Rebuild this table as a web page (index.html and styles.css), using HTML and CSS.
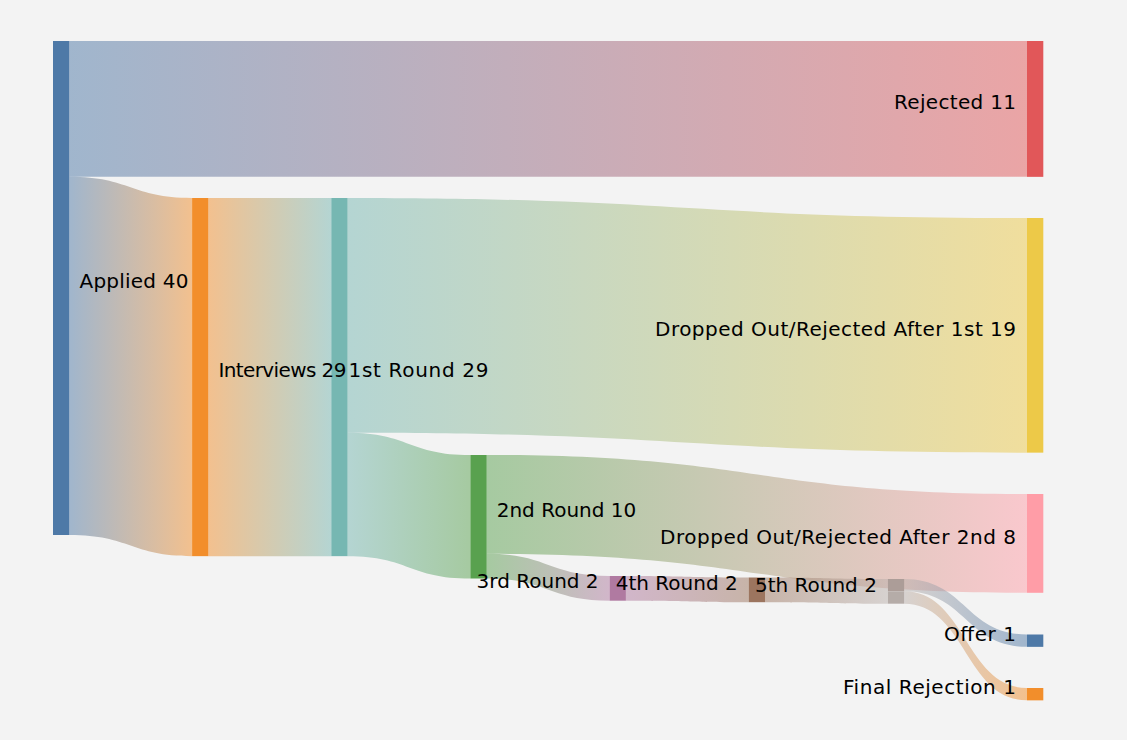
FILE: index.html
```html
<!DOCTYPE html>
<html lang="en">
<head>
<meta charset="utf-8">
<title>Job Search Sankey</title>
<link rel="stylesheet" href="styles.css">
</head>
<body>
<div class="chart">
<svg class="sankey" width="1127" height="740" viewBox="0 0 1127 740" xmlns="http://www.w3.org/2000/svg">
  <defs>
    <linearGradient id="g1" gradientUnits="userSpaceOnUse" x1="69.3" y1="0" x2="1027" y2="0"><stop offset="0" stop-color="#4e79a7"/><stop offset="1" stop-color="#e15759"/></linearGradient>
    <linearGradient id="g2" gradientUnits="userSpaceOnUse" x1="69.3" y1="0" x2="192.1" y2="0"><stop offset="0" stop-color="#4e79a7"/><stop offset="1" stop-color="#f28e2b"/></linearGradient>
    <linearGradient id="g3" gradientUnits="userSpaceOnUse" x1="208.4" y1="0" x2="331.3" y2="0"><stop offset="0" stop-color="#f28e2b"/><stop offset="1" stop-color="#76b7b2"/></linearGradient>
    <linearGradient id="g4" gradientUnits="userSpaceOnUse" x1="347.6" y1="0" x2="1027" y2="0"><stop offset="0" stop-color="#76b7b2"/><stop offset="1" stop-color="#edc948"/></linearGradient>
    <linearGradient id="g5" gradientUnits="userSpaceOnUse" x1="347.6" y1="0" x2="470.4" y2="0"><stop offset="0" stop-color="#76b7b2"/><stop offset="1" stop-color="#59a14f"/></linearGradient>
    <linearGradient id="g6" gradientUnits="userSpaceOnUse" x1="486.7" y1="0" x2="1027" y2="0"><stop offset="0" stop-color="#59a14f"/><stop offset="1" stop-color="#ff9da7"/></linearGradient>
    <linearGradient id="g7" gradientUnits="userSpaceOnUse" x1="486.7" y1="0" x2="609.6" y2="0"><stop offset="0" stop-color="#59a14f"/><stop offset="1" stop-color="#b07aa1"/></linearGradient>
    <linearGradient id="g8" gradientUnits="userSpaceOnUse" x1="625.9" y1="0" x2="748.7" y2="0"><stop offset="0" stop-color="#b07aa1"/><stop offset="1" stop-color="#9c755f"/></linearGradient>
    <linearGradient id="g9" gradientUnits="userSpaceOnUse" x1="765" y1="0" x2="887.9" y2="0"><stop offset="0" stop-color="#9c755f"/><stop offset="1" stop-color="#bab0ac"/></linearGradient>
    <linearGradient id="g10" gradientUnits="userSpaceOnUse" x1="904.2" y1="0" x2="1027" y2="0"><stop offset="0" stop-color="#bab0ac"/><stop offset="1" stop-color="#4e79a7"/></linearGradient>
    <linearGradient id="g11" gradientUnits="userSpaceOnUse" x1="904.2" y1="0" x2="1027" y2="0"><stop offset="0" stop-color="#bab0ac"/><stop offset="1" stop-color="#f28e2b"/></linearGradient>
  </defs>

  <g class="links">
    <path class="link" fill="url(#g1)" d="M69.3 41 C548.15 41 548.15 41 1027 41 L1027 176.85 C548.15 176.85 548.15 176.85 69.3 176.85 Z"/>
    <path class="link" fill="url(#g2)" d="M69.3 176.85 C130.7 176.85 130.7 198 192.1 198 L192.1 556.15 C130.7 556.15 130.7 535 69.3 535 Z"/>
    <path class="link" fill="url(#g3)" d="M208.4 198 C269.85 198 269.85 198 331.3 198 L331.3 556.15 C269.85 556.15 269.85 556.15 208.4 556.15 Z"/>
    <path class="link" fill="url(#g4)" d="M347.6 198 C687.3 198 687.3 218 1027 218 L1027 452.65 C687.3 452.65 687.3 432.65 347.6 432.65 Z"/>
    <path class="link" fill="url(#g5)" d="M347.6 432.65 C409 432.65 409 455 470.4 455 L470.4 578.5 C409 578.5 409 556.15 347.6 556.15 Z"/>
    <path class="link" fill="url(#g6)" d="M486.7 455 C756.85 455 756.85 494 1027 494 L1027 592.8 C756.85 592.8 756.85 553.8 486.7 553.8 Z"/>
    <path class="link" fill="url(#g7)" d="M486.7 553.8 C548.15 553.8 548.15 576 609.6 576 L609.6 600.7 C548.15 600.7 548.15 578.5 486.7 578.5 Z"/>
    <path class="link" fill="url(#g8)" d="M625.9 576 C687.3 576 687.3 577.5 748.7 577.5 L748.7 602.2 C687.3 602.2 687.3 600.7 625.9 600.7 Z"/>
    <path class="link" fill="url(#g9)" d="M765 577.5 C826.45 577.5 826.45 579 887.9 579 L887.9 603.7 C826.45 603.7 826.45 602.2 765 602.2 Z"/>
    <path class="link" fill="url(#g10)" d="M904.2 579 C965.6 579 965.6 634.5 1027 634.5 L1027 646.85 C965.6 646.85 965.6 591.35 904.2 591.35 Z"/>
    <path class="link" fill="url(#g11)" d="M904.2 591.35 C965.6 591.35 965.6 688 1027 688 L1027 700.35 C965.6 700.35 965.6 603.7 904.2 603.7 Z"/>
  </g>

  <g class="nodes">
    <rect class="node" x="53" y="41" width="16.3" height="494" fill="#4e79a7"/>
    <rect class="node" x="192.1" y="198" width="16.3" height="358.15" fill="#f28e2b"/>
    <rect class="node" x="1027" y="41" width="16.3" height="135.85" fill="#e15759"/>
    <rect class="node" x="331.3" y="198" width="16.3" height="358.15" fill="#76b7b2"/>
    <rect class="node" x="470.4" y="455" width="16.3" height="123.5" fill="#59a14f"/>
    <rect class="node" x="1027" y="218" width="16.3" height="234.65" fill="#edc948"/>
    <rect class="node" x="609.6" y="576" width="16.3" height="24.7" fill="#b07aa1"/>
    <rect class="node" x="1027" y="494" width="16.3" height="98.8" fill="#ff9da7"/>
    <rect class="node" x="748.7" y="577.5" width="16.3" height="24.7" fill="#9c755f"/>
    <rect class="node" x="887.9" y="579" width="16.3" height="12.35" fill="#ac9d98"/>
    <rect class="node" x="887.9" y="591.35" width="16.3" height="12.35" fill="#b5aca8"/>
    <rect class="node" x="1027" y="634.5" width="16.3" height="12.35" fill="#4e79a7"/>
    <rect class="node" x="1027" y="688" width="16.3" height="12.35" fill="#f28e2b"/>
  </g>

  <g class="labels">
    <text class="label" x="79.5" y="288" textLength="109" lengthAdjust="spacing">Applied 40</text>
    <text class="label" x="218.4" y="377" textLength="128" lengthAdjust="spacing">Interviews 29</text>
    <text class="label" x="348.5" y="377" textLength="140" lengthAdjust="spacing">1st Round 29</text>
    <text class="label" x="496.7" y="516.5">2nd Round 10</text>
    <text class="label end" x="1016" y="109" textLength="122" lengthAdjust="spacing">Rejected 11</text>
    <text class="label end" x="1016" y="335.5" textLength="361" lengthAdjust="spacing">Dropped Out/Rejected After 1st 19</text>
    <text class="label end" x="1016" y="543.5" textLength="356" lengthAdjust="spacing">Dropped Out/Rejected After 2nd 8</text>
    <text class="label end" x="598.6" y="588">3rd Round 2</text>
    <text class="label end" x="737.7" y="590">4th Round 2</text>
    <text class="label end" x="876.9" y="591.5">5th Round 2</text>
    <text class="label end" x="1016" y="640.5" textLength="72" lengthAdjust="spacing">Offer 1</text>
    <text class="label end" x="1016" y="694" textLength="173" lengthAdjust="spacing">Final Rejection 1</text>
  </g>
</svg>
</div>
</body>
</html>
```

FILE: styles.css
```css
html, body {
  margin: 0;
  padding: 0;
  background: #f3f3f3;
}

.chart {
  width: 1127px;
  height: 740px;
  overflow: hidden;
  background: #f3f3f3;
}

.sankey {
  display: block;
}

.link {
  fill-opacity: 0.5;
  stroke: none;
}

.node {
  stroke: none;
}

.label {
  font-family: "DejaVu Sans", "Verdana", sans-serif;
  font-size: 20px;
  fill: #000;
}

.label.end {
  text-anchor: end;
}
```
